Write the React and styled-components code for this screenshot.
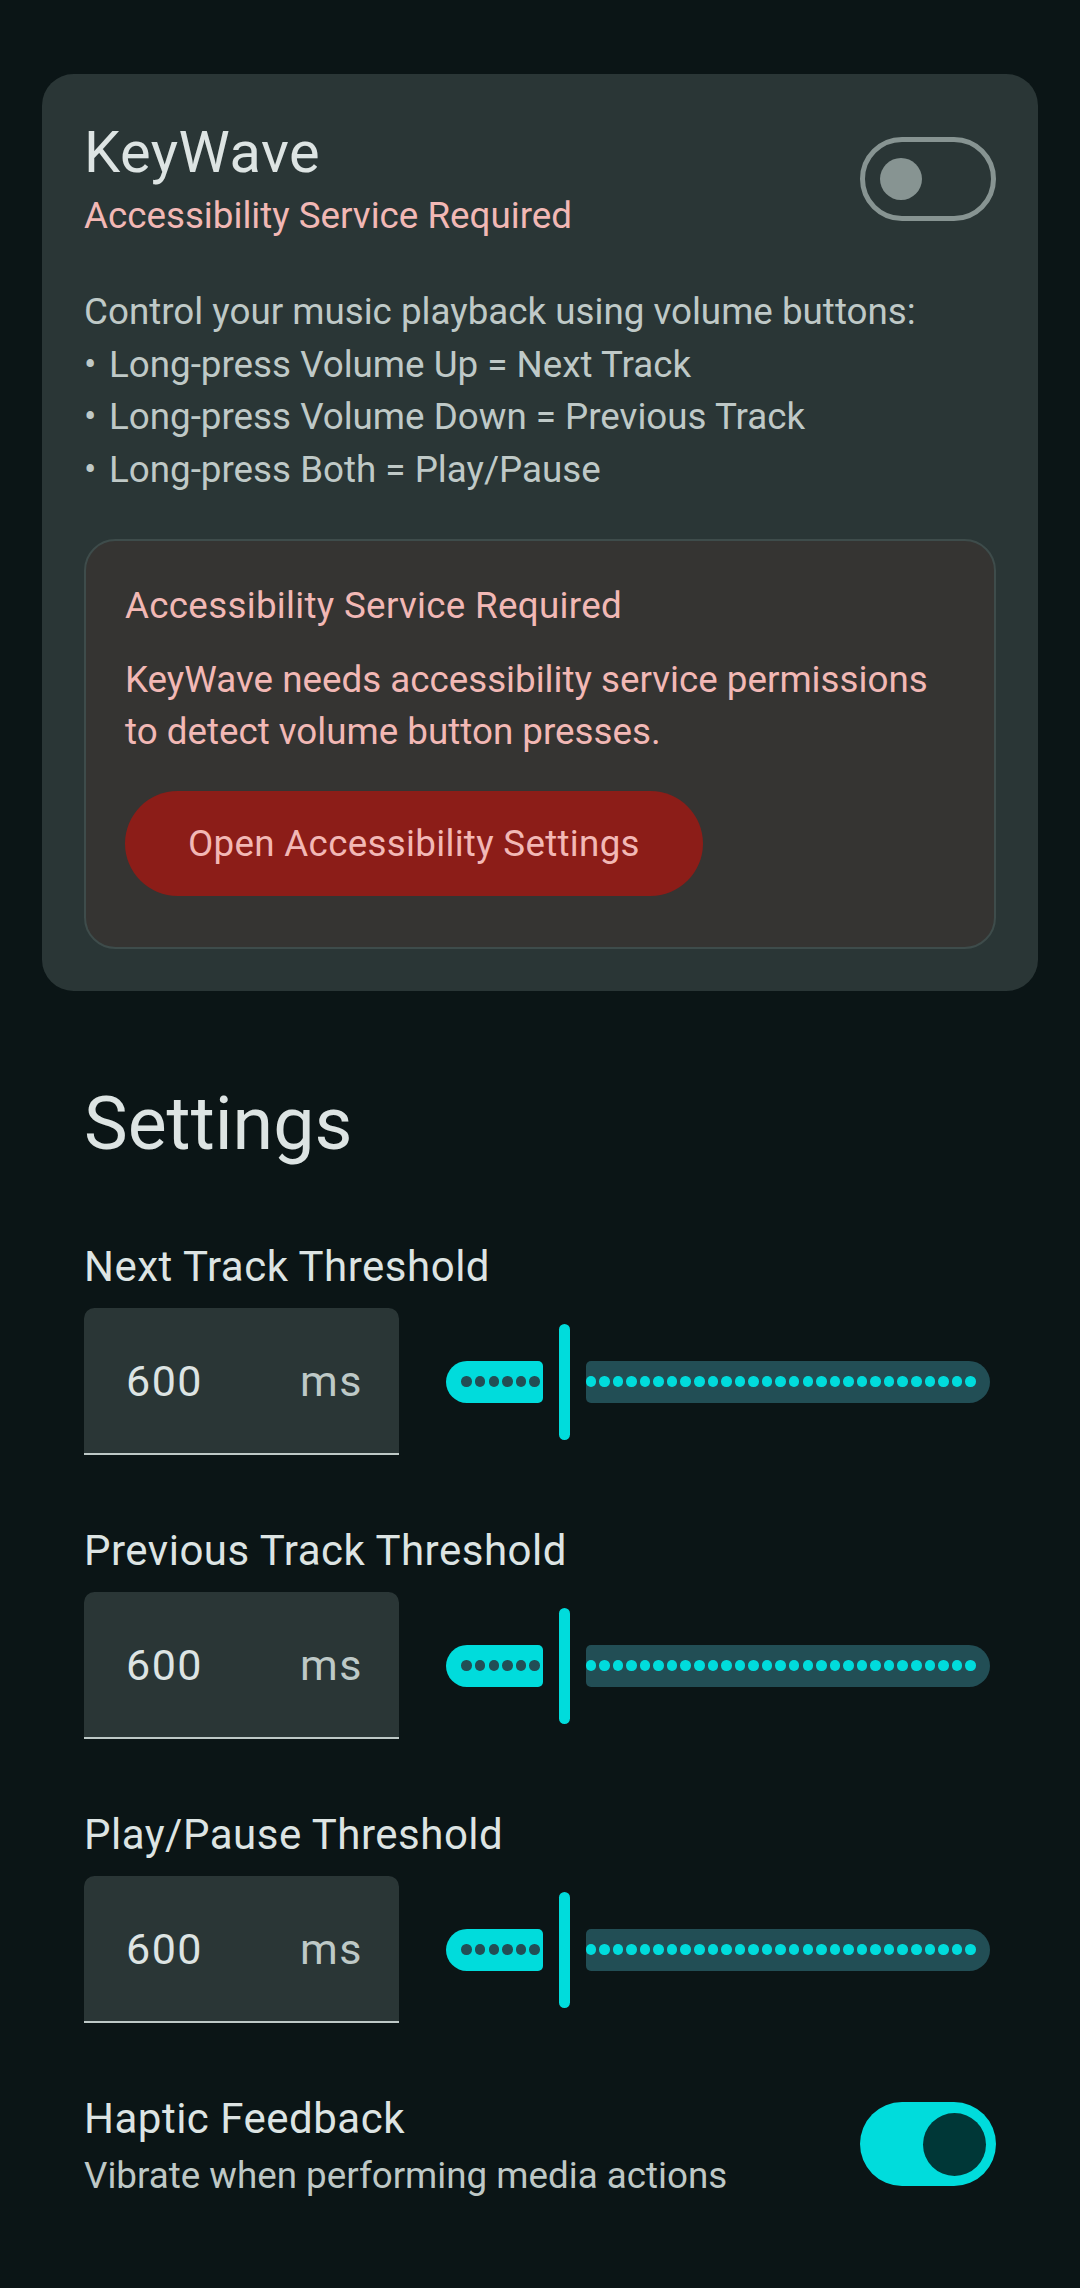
import React from 'react'
import styled, { createGlobalStyle } from 'styled-components'

const GlobalStyle = createGlobalStyle`
  html, body {
    margin: 0;
    padding: 0;
    background: #0b1516;
  }
  body {
    font-family: Roboto, 'Liberation Sans', sans-serif;
    color: #dde4e3;
    -webkit-font-smoothing: antialiased;
  }
  * {
    box-sizing: border-box;
  }
`

const thresholds = [
  { id: 'next', label: 'Next Track Threshold', value: 600 },
  { id: 'prev', label: 'Previous Track Threshold', value: 600 },
  { id: 'both', label: 'Play/Pause Threshold', value: 600 },
]

const rules = [
  'Long-press Volume Up = Next Track',
  'Long-press Volume Down = Previous Track',
  'Long-press Both = Play/Pause',
]

const App = () => {
  return (
    <>
      <GlobalStyle />
      <Page>
        <Card>
          <CardHeader>
            <div>
              <Title>KeyWave</Title>
              <Subtitle>Accessibility Service Required</Subtitle>
            </div>
            <Switch checked={false} />
          </CardHeader>
          <Description>
            <div>Control your music playback using volume buttons:</div>
            {rules.map((r) => (
              <div key={r}>
                <Bullet>•</Bullet>
                {r}
              </div>
            ))}
          </Description>
          <WarningBox>
            <WarningTitle>Accessibility Service Required</WarningTitle>
            <WarningText>
              KeyWave needs accessibility service permissions to detect volume
              button presses.
            </WarningText>
            <DangerButton>Open Accessibility Settings</DangerButton>
          </WarningBox>
        </Card>

        <Settings>
          <SectionTitle>Settings</SectionTitle>
          {thresholds.map((t) => (
            <Group key={t.id}>
              <Label>{t.label}</Label>
              <Row>
                <Field>
                  <FieldValue>{t.value}</FieldValue>
                  <Suffix>ms</Suffix>
                </Field>
                <Slider active={6} inactive={29} />
              </Row>
            </Group>
          ))}
          <ToggleRow>
            <div>
              <Label>Haptic Feedback</Label>
              <Hint>Vibrate when performing media actions</Hint>
            </div>
            <Switch checked />
          </ToggleRow>
        </Settings>
      </Page>
    </>
  )
}

const Switch = ({ checked }) => (
  <SwitchTrack $on={checked}>
    <SwitchThumb $on={checked} />
  </SwitchTrack>
)

const Slider = ({ active, inactive }) => (
  <SliderWrap>
    <ActiveTrack>
      {Array.from({ length: active }).map((_, i) => (
        <Dot key={i} $dark />
      ))}
    </ActiveTrack>
    <Thumb />
    <InactiveTrack>
      {Array.from({ length: inactive }).map((_, i) => (
        <Dot key={i} />
      ))}
    </InactiveTrack>
  </SliderWrap>
)

export default App

const Page = styled.div`
  padding: 74px 42px 80px;
`

const Card = styled.div`
  background: #2a3636;
  border-radius: 31.5px;
  padding: 42px;
`

const CardHeader = styled.div`
  display: flex;
  align-items: center;
  justify-content: space-between;
`

const Title = styled.div`
  font-size: 57.75px;
  line-height: 73.5px;
  letter-spacing: 0.5px;
  color: #dde4e3;
`

const Subtitle = styled.div`
  font-size: 36.75px;
  line-height: 52.5px;
  color: #f2b8b5;
`

const Description = styled.div`
  margin-top: 44px;
  font-size: 36.75px;
  line-height: 52.5px;
  color: #bfc9c7;
`

const Bullet = styled.span`
  display: inline-block;
  width: 25px;
`

const WarningBox = styled.div`
  margin-top: 43px;
  background: #353432;
  border: 2.6px solid #3e4c4b;
  border-radius: 31.5px;
  padding: 39px 39px 40px;
`

const WarningTitle = styled.div`
  font-size: 36.75px;
  line-height: 52.5px;
  letter-spacing: 0.3px;
  color: #f2b8b5;
`

const WarningText = styled.div`
  margin-top: 21px;
  font-size: 36.75px;
  line-height: 52.5px;
  color: #f2b8b5;
`

const DangerButton = styled.button`
  display: block;
  margin: 32.5px 0 10.5px;
  height: 105px;
  padding: 0 63px;
  border: none;
  border-radius: 52.5px;
  background: #8c1d18;
  color: #f2b8b5;
  font-family: inherit;
  font-size: 36.75px;
  letter-spacing: 0.3px;
`

const Settings = styled.div`
  margin-top: 86px;
  padding: 0 42px;
  display: flex;
  flex-direction: column;
  gap: 63.5px;
`

const SectionTitle = styled.div`
  font-size: 73.5px;
  line-height: 94.5px;
  color: #dde4e3;
`

const Group = styled.div`
  display: flex;
  flex-direction: column;
  gap: 10.5px;
`

const Label = styled.div`
  font-size: 42px;
  line-height: 63px;
  letter-spacing: 0.5px;
  color: #dde4e3;
`

const Row = styled.div`
  display: flex;
  align-items: center;
`

const Field = styled.div`
  width: 315px;
  height: 147px;
  flex-shrink: 0;
  display: flex;
  align-items: center;
  padding: 2px 36px 0 42px;
  background: #2a3636;
  border-radius: 10.5px 10.5px 0 0;
  border-bottom: 2.6px solid #bec9c7;
  font-size: 43px;
  line-height: 63px;
  letter-spacing: 1.5px;
`

const FieldValue = styled.span`
  flex: 1;
  color: #dde4e3;
`

const Suffix = styled.span`
  color: #bec9c7;
`

const SliderWrap = styled.div`
  margin-left: 47px;
  width: 544px;
  height: 116px;
  display: flex;
  align-items: center;
  gap: 16px;
`

const ActiveTrack = styled.div`
  width: 96.5px;
  height: 42px;
  flex-shrink: 0;
  background: #00dcdc;
  border-radius: 21px 5px 5px 21px;
  display: flex;
  align-items: center;
  gap: 3.07px;
  padding-left: 15.4px;
`

const Thumb = styled.div`
  width: 11px;
  height: 116px;
  flex-shrink: 0;
  border-radius: 5.5px;
  background: #00dcdc;
`

const InactiveTrack = styled.div`
  flex: 1;
  height: 42px;
  background: #224e55;
  border-radius: 5px 21px 21px 5px;
  display: flex;
  align-items: center;
  gap: 3.07px;
`

const Dot = styled.span`
  width: 10.5px;
  height: 10.5px;
  flex-shrink: 0;
  border-radius: 50%;
  background: ${(p) => (p.$dark ? '#224e55' : '#00dcdc')};
`

const ToggleRow = styled.div`
  display: flex;
  align-items: center;
  justify-content: space-between;
`

const Hint = styled.div`
  font-size: 36.75px;
  line-height: 52.5px;
  color: #bec8c6;
`

const SwitchTrack = styled.div`
  width: 136.5px;
  height: 84px;
  flex-shrink: 0;
  border-radius: 42px;
  display: flex;
  align-items: center;
  justify-content: ${(p) => (p.$on ? 'flex-end' : 'flex-start')};
  padding: ${(p) => (p.$on ? '0 10.5px' : '0 15.75px')};
  background: ${(p) => (p.$on ? '#00dcdc' : 'transparent')};
  border: ${(p) => (p.$on ? 'none' : '5.25px solid #879492')};
`

const SwitchThumb = styled.div`
  width: ${(p) => (p.$on ? '63px' : '42px')};
  height: ${(p) => (p.$on ? '63px' : '42px')};
  border-radius: 50%;
  background: ${(p) => (p.$on ? '#003737' : '#879492')};
`
